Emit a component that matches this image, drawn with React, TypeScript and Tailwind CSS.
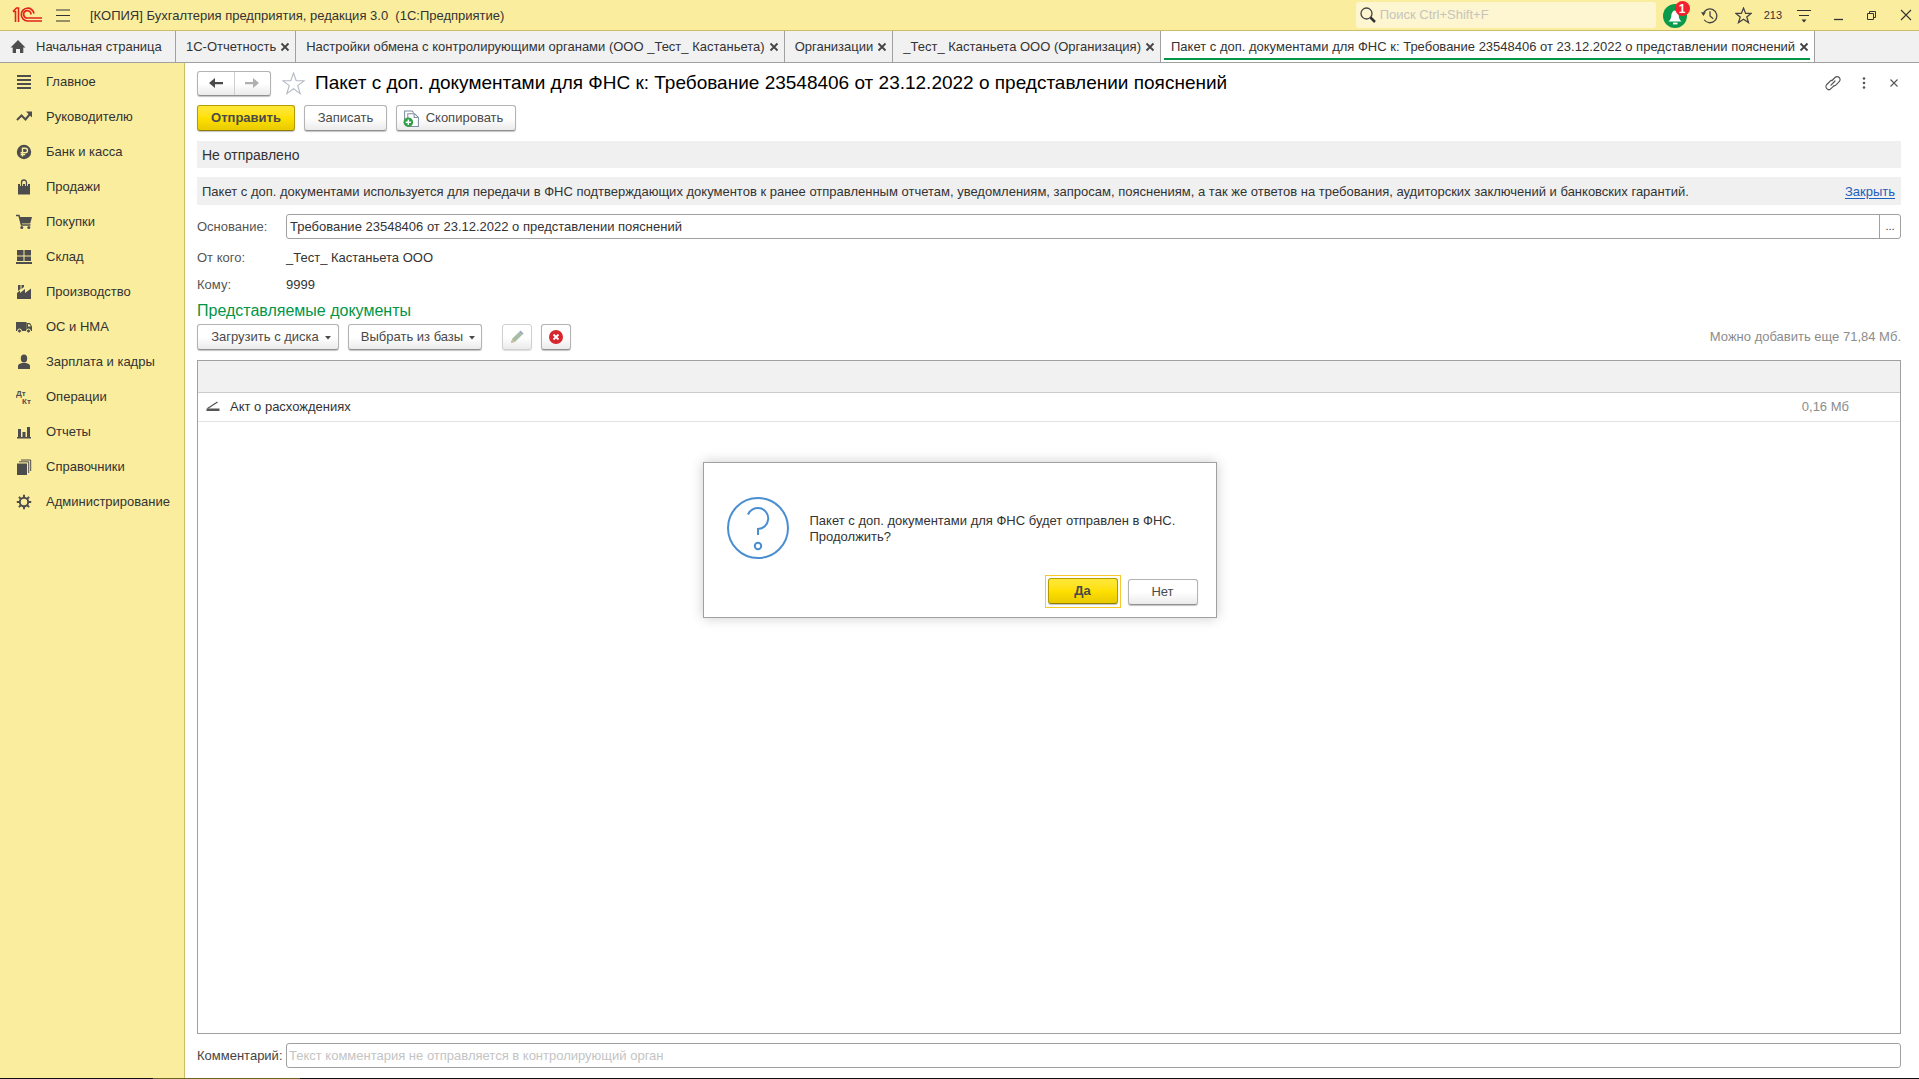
import React from "react";

type IconProps = { children: React.ReactNode; size?: number; box?: number; className?: string };

function Glyph({ children, size = 16, box = 16, className = "" }: IconProps) {
  return (
    <svg width={size} height={size} viewBox={`0 0 ${box} ${box}`} className={className} fill="none" aria-hidden="true">
      {children}
    </svg>
  );
}

const dark = "#4d4d4d";

const navItems: { label: string; icon: React.ReactNode }[] = [
  {
    label: "Главное",
    icon: <path d="M1 1h14v2H1zM1 5h14v2H1zM1 9h14v2H1zM1 13h14v2H1z" fill={dark} />,
  },
  {
    label: "Руководителю",
    icon: (
      <>
        <path d="M1 11l4.500-4.500 4 4L14 5" stroke={dark} strokeWidth="2" />
        <path d="M10 2.500h6v6z" fill={dark} />
      </>
    ),
  },
  {
    label: "Банк и касса",
    icon: (
      <>
        <circle cx="8" cy="8" r="7.2" fill={dark} />
        <path d="M6.5 12.5V4.2h2.700a2.200 2.200 0 010 4.600H4.600M4.600 10.600h4.600" stroke="#fbed9e" strokeWidth="1.400" />
      </>
    ),
  },
  {
    label: "Продажи",
    icon: (
      <>
        <path d="M2 5h12v10.500H2z" fill={dark} />
        <path d="M5.500 7V3.500a2.500 2.500 0 015 0V7" stroke="#fbed9e" strokeWidth="3" />
        <path d="M5.500 7V3.500a2.500 2.500 0 015 0V7" stroke={dark} strokeWidth="1.300" />
      </>
    ),
  },
  {
    label: "Покупки",
    icon: (
      <>
        <path d="M0 1.500h3l2.500 9.500h9" stroke={dark} strokeWidth="1.500" />
        <path d="M3.500 3H16l-1.800 6.500H5z" fill={dark} />
        <circle cx="5.800" cy="13.500" r="1.500" fill={dark} />
        <circle cx="12.800" cy="13.500" r="1.500" fill={dark} />
      </>
    ),
  },
  {
    label: "Склад",
    icon: <path d="M1 1h6.500v5.500H1zM8.500 1H15v5.500H8.500zM1 7.500h6.500v4.500H1zM8.500 7.500H15v4.500H8.500zM0 13h16v2H0z" fill={dark} />,
  },
  {
    label: "Производство",
    icon: <path d="M1 15V9l3-2.500V9l5-4v4l6-4.500V15zM2 1h2.500v4L2 7zM5.500 1H8v2L5.500 5z" fill={dark} />,
  },
  {
    label: "ОС и НМА",
    icon: (
      <>
        <path d="M0 3h10.500v9H0z" fill={dark} />
        <path d="M10.500 4h3.500l2 3.500V12h-5.500zM12 5.200v2.300h2.800l-1.300-2.300z" fill={dark} fillRule="evenodd" />
        <circle cx="3.500" cy="12" r="2" fill={dark} stroke="#fbed9e" strokeWidth="1" />
        <circle cx="12.500" cy="12" r="2" fill={dark} stroke="#fbed9e" strokeWidth="1" />
      </>
    ),
  },
  {
    label: "Зарплата и кадры",
    icon: (
      <>
        <ellipse cx="8" cy="4.500" rx="3.200" ry="4" fill={dark} />
        <path d="M2 15v-3c0-2 2-2.500 4-3h4c2 .5 4 1 4 3v3z" fill={dark} />
      </>
    ),
  },
  {
    label: "Операции",
    icon: (
      <>
        <text x="0" y="7" fontSize="8" fontWeight="700" fontFamily="Liberation Sans, sans-serif" fill={dark}>Дт</text>
        <text x="6" y="15" fontSize="8" fontWeight="700" fontFamily="Liberation Sans, sans-serif" fill={dark}>Кт</text>
      </>
    ),
  },
  {
    label: "Отчеты",
    icon: <path d="M1 13h14v1.500H1zM2 5h3v8H2zM6.500 8h3v5h-3zM11 3h3v10h-3z" fill={dark} />,
  },
  {
    label: "Справочники",
    icon: (
      <>
        <path d="M1 4.500h10V16H1z" fill={dark} />
        <path d="M3 2.800h9.700V14M5 1h9.700v11" stroke={dark} strokeWidth="1" />
      </>
    ),
  },
  {
    label: "Администрирование",
    icon: (
      <>
        <circle cx="8" cy="8" r="4.200" stroke={dark} strokeWidth="2" />
        <path
          d="M8 .8v3M8 12.200v3M.8 8h3M12.200 8h3M2.900 2.900l2.200 2.200M10.900 10.900l2.200 2.200M2.900 13.100l2.200-2.200M10.900 5.100l2.200-2.200"
          stroke={dark}
          strokeWidth="2"
        />
      </>
    ),
  },
];

const tabs = [
  { label: "1С-Отчетность", active: false },
  { label: "Настройки обмена с контролирующими органами (ООО _Тест_ Кастаньета)", active: false },
  { label: "Организации", active: false },
  { label: "_Тест_ Кастаньета ООО (Организация)", active: false },
  {
    label: "Пакет с доп. документами для ФНС к: Требование 23548406 от 23.12.2022 о представлении пояснений",
    active: true,
  },
];

const plainButton =
  "flex h-[26px] items-center justify-center rounded-[3px] border border-[#b3b3b3] border-b-[#909090] bg-linear-to-b from-white from-50% to-[#ebebeb] text-[#4a4a4a] shadow-[0_1px_1px_#c4c4c4]";
const yellowButton =
  "flex h-[26px] items-center justify-center rounded-[3px] border border-[#b39b00] border-b-[#8f7c00] bg-linear-to-b from-[#ffe838] via-[#ffe000] to-[#e8ca00] font-bold text-[#4a4a4a] shadow-[0_1px_1px_#c4c4c4]";

function TitleBar() {
  return (
    <header className="flex h-[31px] shrink-0 items-center border-b border-[#cdbd66] bg-[#fbed9e]">
      <svg width="30" height="16" viewBox="0 0 30 16" className="ml-3 shrink-0" fill="none" role="img" aria-label="1С">
        <path d="M1 4.500h2.500V15M1 4.500L4.500 1H6.500v14" stroke="#e1251b" strokeWidth="1.600" />
        <path d="M22 6.500A6.400 6.400 0 1015.500 14H30" stroke="#e1251b" strokeWidth="1.700" />
        <path d="M19 7.500A3.700 3.700 0 1015.500 11H30" stroke="#e1251b" strokeWidth="1.700" />
      </svg>
      <button aria-label="Меню" className="ml-[13px]">
        <Glyph>
          <path d="M1 3h14M1 8.500h14M1 14h14" stroke="#333" strokeWidth="1.200" />
        </Glyph>
      </button>
      <div className="ml-[19px] pt-px text-[13px] whitespace-pre text-[#333]">
        [КОПИЯ] Бухгалтерия предприятия, редакция 3.0  (1С:Предприятие)
      </div>
      <label className="ml-auto flex h-[26px] w-[300px] items-center gap-1 rounded-[3px] bg-[#fdf6d0] pl-1">
        <Glyph size={16}>
          <circle cx="6.500" cy="6.500" r="5.500" stroke="#444" strokeWidth="1.300" />
          <path d="M10.500 10.500l4.500 4.500" stroke="#333" strokeWidth="2.500" />
        </Glyph>
        <input
          type="text"
          aria-label="Поиск"
          placeholder="Поиск Ctrl+Shift+F"
          className="min-w-0 flex-1 bg-transparent text-[13px] outline-none placeholder:text-[#c6c4bd]"
        />
      </label>
      <button aria-label="Уведомления" className="relative ml-[7px] h-[26px] w-6">
        <svg width="24" height="24" viewBox="0 0 24 24" className="mt-px" fill="none" aria-hidden="true">
          <circle cx="12" cy="12" r="12" fill="#0a9a49" />
          <path d="M5.500 17.500c2-1.500 2.500-3 2.800-6 .3-3 1.700-5 3.700-5s3.400 2 3.700 5c.3 3 .8 4.500 2.800 6z" fill="#fff" />
          <path d="M10 19.500h4.500" stroke="#fff" strokeWidth="1.800" />
        </svg>
        <span className="absolute -top-px -right-[3px] flex size-[15px] items-center justify-center rounded-full bg-[#f4212d] text-[12px] font-bold text-white">
          1
        </span>
      </button>
      <button aria-label="История" className="ml-3.5">
        <Glyph size={17}>
          <path d="M2 7a6.500 6.500 0 111 5" stroke="#444" strokeWidth="1.200" />
          <path d="M0 5h4.600L2.300 8.500z" fill="#444" />
          <path d="M8.500 4v4.500l3 2.500" stroke="#444" strokeWidth="1.200" />
        </Glyph>
      </button>
      <button aria-label="Избранное" className="ml-[17px]">
        <Glyph size={17}>
          <path d="M8 1l2 5h5.300l-4.200 3.300 1.600 5.400L8 11.500l-4.700 3.200 1.600-5.400L.7 6H6z" stroke="#444" strokeWidth="1.200" />
        </Glyph>
      </button>
      <span className="ml-3 text-[11px] text-[#333]">213</span>
      <button aria-label="Настройка" className="ml-3.5">
        <Glyph>
          <path d="M1 3.500h14M3 8.500h10" stroke="#333" strokeWidth="1.200" />
          <path d="M5.500 12.500h5l-2.500 3z" fill="#333" />
        </Glyph>
      </button>
      <button aria-label="Свернуть" className="ml-[18px]">
        <Glyph>
          <path d="M4 12.500h9" stroke="#333" strokeWidth="1.300" />
        </Glyph>
      </button>
      <button aria-label="Развернуть" className="ml-[18px]">
        <Glyph>
          <path d="M3.500 6.500h6v6h-6zM5.500 6.500v-2h6v6h-2" stroke="#333" strokeWidth="1" />
        </Glyph>
      </button>
      <button aria-label="Закрыть приложение" className="mr-[5px] ml-[18px]">
        <Glyph>
          <path d="M3 3l10 10M13 3L3 13" stroke="#333" strokeWidth="1.100" />
        </Glyph>
      </button>
    </header>
  );
}

function TabBar() {
  return (
    <nav className="flex h-8 shrink-0 border-b border-[#a0a0a0] bg-[#f1f1f1] text-[13px] text-[#333]" aria-label="Открытые окна">
      <button className="flex w-[176px] items-center border-r border-[#a0a0a0] pl-2.5">
        <Glyph size={16}>
          <path d="M8 1l7.500 7.500h-2.200V14H10v-4H6v4H2.700V8.500H.5z" fill={dark} />
        </Glyph>
        <span className="ml-2.5">Начальная страница</span>
      </button>
      {tabs.map((t) => (
        <div
          key={t.label}
          className={`relative flex items-center gap-1 border-r border-[#a0a0a0] pr-[5px] pl-2.5 ${t.active ? "bg-white" : ""}`}
        >
          <button className="whitespace-nowrap">{t.label}</button>
          <button aria-label={`Закрыть ${t.label}`}>
            <Glyph size={10} box={10}>
              <path d="M1.500 1.500l7 7M8.500 1.500l-7 7" stroke="#444" strokeWidth="1.800" />
            </Glyph>
          </button>
          {t.active && <span className="absolute right-1 bottom-0.5 left-[3px] h-0.5 bg-[#009646]" />}
        </div>
      ))}
    </nav>
  );
}

function Sidebar() {
  return (
    <aside className="w-[185px] shrink-0 border-r border-[#cdbd66] bg-[#fbed9e] pt-px">
      <ul className="text-[13px] text-[#333]">
        {navItems.map((n) => (
          <li key={n.label}>
            <button className="flex h-[35px] w-full items-center gap-3.5 pl-4">
              <Glyph>{n.icon}</Glyph>
              <span>{n.label}</span>
            </button>
          </li>
        ))}
      </ul>
    </aside>
  );
}

function DropArrow() {
  return (
    <svg width="6" height="4" viewBox="0 0 6 4" className="mt-0.5" aria-hidden="true">
      <path d="M0 0h6L3 3.500z" fill="#4a4a4a" />
    </svg>
  );
}

function Heading() {
  return (
    <div className="flex h-6 items-center">
      <div className="flex h-[25px] w-[74px] overflow-hidden rounded-[3px] border border-[#b3b3b3] border-b-[#909090] bg-linear-to-b from-white from-50% to-[#ebebeb] shadow-[0_1px_1px_#c4c4c4]">
        <button aria-label="Назад" className="flex flex-1 items-center justify-center border-r border-[#cfcfcf]">
          <Glyph size={14} box={14}>
            <path d="M0 7l6-5v4h8v2.200H6V12z" fill="#4a4a4a" />
          </Glyph>
        </button>
        <button aria-label="Вперед" className="flex flex-1 items-center justify-center">
          <Glyph size={14} box={14}>
            <path d="M14 7L8 2v4H0v2.200h8V12z" fill="#b0b0b0" />
          </Glyph>
        </button>
      </div>
      <button aria-label="В избранное" className="ml-[11px]">
        <Glyph size={23} box={23}>
          <path d="M11.500 1l2.700 7.700h8l-6.500 4.900 2.500 8-6.700-4.900-6.700 4.900 2.500-8L.8 8.700h8z" stroke="#b4bac2" strokeWidth="1.100" />
        </Glyph>
      </button>
      <h1 className="ml-2.5 text-[19px] whitespace-nowrap text-black">
        Пакет с доп. документами для ФНС к: Требование 23548406 от 23.12.2022 о представлении пояснений
      </h1>
      <div className="ml-auto flex items-center gap-4">
        <button aria-label="Ссылка">
          <Glyph>
            <g stroke="#555" strokeWidth="1.200" strokeLinecap="round">
              <path d="M7 5.500l3-3a2.900 2.900 0 014.200 4.200l-3.400 3.400a2.900 2.900 0 01-1.500.8" />
              <path d="M9 10.700l-3 3a2.900 2.900 0 01-4.200-4.200l3.400-3.400a2.900 2.900 0 011.500-.8" />
              <path d="M6 10.200l4-4.200" />
            </g>
          </Glyph>
        </button>
        <button aria-label="Ещё">
          <Glyph size={14} box={14}>
            <circle cx="7" cy="2.500" r="1.300" fill="#555" />
            <circle cx="7" cy="7" r="1.300" fill="#555" />
            <circle cx="7" cy="11.500" r="1.300" fill="#555" />
          </Glyph>
        </button>
        <button aria-label="Закрыть документ">
          <Glyph size={14} box={14}>
            <path d="M3.500 3.500l7 7M10.500 3.500l-7 7" stroke="#555" strokeWidth="1.100" />
          </Glyph>
        </button>
      </div>
    </div>
  );
}

function ConfirmDialog() {
  return (
    <div
      role="dialog"
      aria-label="Подтверждение"
      className="absolute top-[462px] left-1/2 flex h-[156px] w-[514px] -translate-x-1/2 border border-[#a0a0a0] bg-white shadow-[0_0_12px_rgba(0,0,0,0.2)]"
    >
      <svg width="64" height="64" viewBox="0 0 64 64" className="mt-[33px] ml-[22px] shrink-0" fill="none" aria-hidden="true">
        <g stroke="#4a8ed2" strokeWidth="2">
          <circle cx="32" cy="32" r="30" />
          <path d="M22 18.500a10.500 10.500 0 1110 14.500v6" />
          <circle cx="32" cy="50" r="3.200" />
        </g>
      </svg>
      <div className="flex flex-1 flex-col pr-[18px] pl-5">
        <p className="pt-[50px] text-[13px] leading-4 text-[#333]">
          Пакет с доп. документами для ФНС будет отправлен в ФНС.
          <br />
          Продолжить?
        </p>
        <div className="mt-auto mb-[9px] flex items-center justify-end gap-[7px]">
          <div className="border border-[#f5ca28] px-0.5 pt-0.5 pb-[3px]">
            <button className={`${yellowButton} w-[70px] text-[13px]`}>Да</button>
          </div>
          <button className={`${plainButton} w-[70px] text-[13px]`}>Нет</button>
        </div>
      </div>
    </div>
  );
}

function DocumentForm() {
  return (
    <main className="flex min-w-0 flex-1 flex-col bg-white pt-2 pr-[18px] pb-2.5 pl-3 text-[13px] text-[#333]">
      <Heading />
      <div className="mt-2.5 flex gap-[9px]">
        <button className={`${yellowButton} w-[98px]`}>Отправить</button>
        <button className={`${plainButton} w-[83px]`}>Записать</button>
        <button className={`${plainButton} w-[120px] gap-1.5 pr-1.5`}>
          <Glyph size={17}>
            <path d="M1.500 12V1h7l1.500 1.500" stroke="#7d8da1" />
            <path d="M4.500 3.500h6.500l3.500 3.500v8.500h-10z" fill="#fff" stroke="#7d8da1" />
            <path d="M10.500 3.500v3.500h3.500" stroke="#7d8da1" />
            <circle cx="5" cy="11.500" r="4.500" fill="#2fa045" />
            <path d="M5 9v5M2.500 11.500h5" stroke="#fff" strokeWidth="1.300" />
          </Glyph>
          Скопировать
        </button>
      </div>
      <div className="mt-2.5 flex h-[27px] items-center bg-[#f0f0f0] pt-px pl-[5px] text-[14px]">Не отправлено</div>
      <div className="mt-[9px] flex h-7 items-center justify-between bg-[#f0f0f0] pt-px pr-1.5 pl-[5px]">
        <span>
          Пакет с доп. документами используется для передачи в ФНС подтверждающих документов к ранее отправленным отчетам,
          уведомлениям, запросам, пояснениям, а так же ответов на требования, аудиторских заключений и банковских гарантий.
        </span>
        <a href="#close" className="text-[#1c5fbc] underline underline-offset-2">
          Закрыть
        </a>
      </div>
      <div className="mt-[9px] flex items-center">
        <label htmlFor="base" className="w-[89px] text-[#555]">
          Основание:
        </label>
        <div className="flex h-[25px] flex-1 rounded-[3px] border border-[#a0a0a0]">
          <input
            id="base"
            type="text"
            className="min-w-0 flex-1 bg-transparent px-[3px] outline-none"
            defaultValue="Требование 23548406 от 23.12.2022 о представлении пояснений"
          />
          <button aria-label="Выбрать" className="w-[21px] border-l border-[#a0a0a0] text-[11px]">
            ...
          </button>
        </div>
      </div>
      <dl className="mt-[5px] grid grid-cols-[89px_1fr] leading-[27px]">
        <dt className="text-[#555]">От кого:</dt>
        <dd>_Тест_ Кастаньета ООО</dd>
        <dt className="text-[#555]">Кому:</dt>
        <dd>9999</dd>
      </dl>
      <h2 className="text-[16px] leading-[26px] text-[#009646]">Представляемые документы</h2>
      <div className="flex items-center gap-[9px]">
        <button className={`${plainButton} w-[142px] gap-1.5 pl-1.5`}>
          Загрузить с диска <DropArrow />
        </button>
        <button className={`${plainButton} w-[134px] gap-1.5 pl-1.5`}>
          Выбрать из базы <DropArrow />
        </button>
        <button
          aria-label="Изменить"
          disabled
          className="ml-[11px] flex h-[26px] w-[30px] items-center justify-center rounded-[3px] border border-[#d0d0d0] bg-linear-to-b from-white from-50% to-[#ebebeb] shadow-[0_1px_1px_#dcdcdc]"
        >
          <Glyph size={14} box={14}>
            <path d="M1 13l1.200-4.200L9 2l3 3-6.800 6.800z" fill="#a5bda4" />
            <path d="M9 2l1.500-1.500L13.500 3.500 12 5z" fill="#9aa7b8" />
            <path d="M1 13l1.200-4.200 3 3z" fill="#c9bfa4" />
          </Glyph>
        </button>
        <button aria-label="Удалить" className={`${plainButton} w-[30px]`}>
          <Glyph size={14} box={14}>
            <circle cx="7" cy="7" r="7" fill="#d9262d" />
            <path d="M4.500 4.500l5 5M9.500 4.500l-5 5" stroke="#fff" strokeWidth="1.800" />
          </Glyph>
        </button>
        <span className="ml-auto text-[#8c8c8c]">Можно добавить еще 71,84 Мб.</span>
      </div>
      <div className="mt-2.5 flex-1 border border-[#a0a0a0]">
        <table className="w-full border-collapse">
          <thead>
            <tr className="h-[31px] border-b border-[#cccccc]">
              <th className="bg-[#f1f1f1]" aria-label="Документ" />
              <th className="bg-[#f1f1f1]" aria-label="Размер" />
            </tr>
          </thead>
          <tbody>
            <tr className="h-[29px] border-b border-[#e2e2e2]">
              <td className="pl-2">
                <div className="flex items-center gap-2.5">
                  <Glyph size={14} box={14}>
                    <path d="M1.500 8.500L11.500 2" stroke="#555" strokeWidth="1.300" />
                    <path d="M.5 8.500h13V11H.5z" fill="#555" />
                  </Glyph>
                  Акт о расхождениях
                </div>
              </td>
              <td className="w-[110px] pr-[51px] text-right whitespace-nowrap text-[#8c8c8c]">0,16 Мб</td>
            </tr>
          </tbody>
        </table>
      </div>
      <div className="mt-[9px] flex items-center">
        <label htmlFor="comment" className="w-[89px] text-[#444]">
          Комментарий:
        </label>
        <input
          id="comment"
          type="text"
          placeholder="Текст комментария не отправляется в контролирующий орган"
          className="h-[25px] min-w-0 flex-1 rounded-[3px] border border-[#a0a0a0] px-0.5 outline-none placeholder:text-[#c4c4c4]"
        />
      </div>
    </main>
  );
}

export default function App() {
  return (
    <div className="relative flex h-screen flex-col overflow-hidden bg-white font-['Liberation_Sans',Arial,sans-serif]">
      <TitleBar />
      <TabBar />
      <div className="flex min-h-0 flex-1">
        <Sidebar />
        <DocumentForm />
      </div>
      <div className="flex h-px shrink-0 bg-[#111]">
        <div className="ml-[153px] w-[147px] bg-[#6b6420]" />
      </div>
      <ConfirmDialog />
    </div>
  );
}
